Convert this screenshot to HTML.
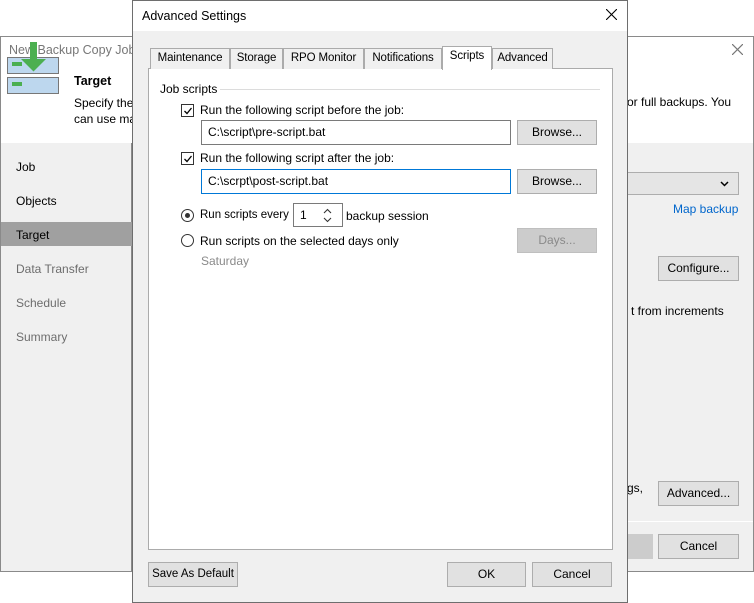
<!DOCTYPE html><html><head><style>
*{box-sizing:border-box;margin:0;padding:0}
body{width:754px;height:603px;background:#fff;font-family:"Liberation Sans",sans-serif;font-size:12px;color:#000;position:relative;overflow:hidden}
.a{position:absolute}
.btn{position:absolute;background:#e1e1e1;border:1px solid #adadad;text-align:center;line-height:23px;font-size:12px}
.tab{position:absolute;top:48px;height:21px;border:1px solid #ababab;border-bottom:none;background:#f0f0f0;line-height:19px;text-align:center;font-size:11.5px;letter-spacing:-0.1px}
.cb{position:absolute;width:13px;height:13px;border:1px solid #333;background:#fff}
.rd{position:absolute;width:13px;height:13px;border:1px solid #333;border-radius:50%;background:#fff}
.in{position:absolute;background:#fff;border:1px solid #7a7a7a;padding-left:6px;line-height:22px}
</style></head><body>
<div class="a" style="left:0;top:36px;width:754px;height:536px;border:1px solid #8a8a8a;background:#f0f0f0"></div>
<div class="a" style="left:1px;top:37px;width:752px;height:106px;background:#fff"></div>
<div class="a" style="left:9px;top:43px;color:#777;font-size:12.5px">New Backup Copy Job</div>
<svg class="a" style="left:732px;top:44px" width="11" height="11"><path d="M0 0L11 11M11 0L0 11" stroke="#777" stroke-width="1.2"/></svg>
<svg class="a" style="left:6px;top:40px" width="56" height="86" viewBox="0 0 56 86">
<rect x="1.5" y="17.5" width="51" height="16" fill="#bdd7ee" stroke="#777"/>
<rect x="1.5" y="37.5" width="51" height="16" fill="#bdd7ee" stroke="#777"/>
<rect x="6" y="42" width="10" height="4" fill="#4caf50"/><rect x="6" y="22" width="10" height="4" fill="#4caf50"/>
<path d="M24 2h7v17h9l-12.5 12.5-12.5-12.5h9z" fill="#4caf50"/></svg>
<div class="a" style="left:74px;top:74px;font-weight:bold;font-size:12.5px">Target</div>
<div class="a" style="left:74px;top:95px;line-height:16px">Specify the<br>can use ma</div>
<div class="a" style="left:627px;top:95px">or full backups. You</div>
<div class="a" style="left:1px;top:143px;width:131px;height:428px;background:#f0f0f0;border-right:1px solid #8a8a8a"></div>
<div class="a" style="left:1px;top:222px;width:131px;height:24px;background:#a0a0a0"></div>
<div class="a" style="left:16px;top:160px">Job</div>
<div class="a" style="left:16px;top:194px">Objects</div>
<div class="a" style="left:16px;top:228px">Target</div>
<div class="a" style="left:16px;top:262px;color:#6d6d6d">Data Transfer</div>
<div class="a" style="left:16px;top:296px;color:#6d6d6d">Schedule</div>
<div class="a" style="left:16px;top:330px;color:#6d6d6d">Summary</div>
<div class="a" style="left:627px;top:172px;width:112px;height:23px;background:#e5e5e5;border:1px solid #adadad"></div>
<svg class="a" style="left:720px;top:181px" width="9" height="6"><path d="M1 1l3.5 3.5L8 1" stroke="#000" stroke-width="1.5" fill="none"/></svg>
<div class="a" style="left:673px;top:202px;color:#0066cc">Map backup</div>
<div class="btn" style="left:658px;top:256px;width:81px">Configure...</div>
<div class="a" style="left:631px;top:304px">t from increments</div>
<div class="a" style="left:627px;top:481px">gs,</div>
<div class="btn" style="left:658px;top:481px;width:81px">Advanced...</div>
<div class="a" style="left:627px;top:521px;width:126px;height:1px;background:#fff"></div>
<div class="a" style="left:627px;top:534px;width:26px;height:25px;background:#cccccc"></div>
<div class="btn" style="left:658px;top:534px;width:81px">Cancel</div>
<div class="a" style="left:132px;top:0;width:496px;height:603px;border:1px solid #6e6e6e;background:#f0f0f0"></div>
<div class="a" style="left:133px;top:1px;width:494px;height:30px;background:#fff"></div>
<div class="a" style="left:142px;top:9px;font-size:12.5px">Advanced Settings</div>
<svg class="a" style="left:606px;top:9px" width="11" height="11"><path d="M0 0L11 11M11 0L0 11" stroke="#000" stroke-width="1.1"/></svg>
<div class="a" style="left:148px;top:68px;width:465px;height:482px;background:#fff;border:1px solid #ababab"></div>
<div class="tab" style="left:150px;width:80px">Maintenance</div>
<div class="tab" style="left:230px;width:53px">Storage</div>
<div class="tab" style="left:283px;width:81px">RPO Monitor</div>
<div class="tab" style="left:364px;width:78px">Notifications</div>
<div class="tab" style="left:442px;top:46px;height:24px;width:50px;background:#fff;z-index:2">Scripts</div>
<div class="tab" style="left:492px;width:61px">Advanced</div>
<div class="a" style="left:160px;top:82px">Job scripts</div>
<div class="a" style="left:220px;top:89px;width:380px;height:1px;background:#dcdcdc"></div>
<div class="cb" style="left:181px;top:104px"><svg class="a" style="left:1px;top:1px" width="10" height="10"><path d="M1.5 5l2.5 2.5L8.5 2" stroke="#000" stroke-width="1.3" fill="none"/></svg></div>
<div class="a" style="left:200px;top:103px">Run the following script before the job:</div>
<div class="in" style="left:201px;top:120px;width:310px;height:25px">C:\script\pre-script.bat</div>
<div class="btn" style="left:517px;top:120px;width:80px;height:25px">Browse...</div>
<div class="cb" style="left:181px;top:152px"><svg class="a" style="left:1px;top:1px" width="10" height="10"><path d="M1.5 5l2.5 2.5L8.5 2" stroke="#000" stroke-width="1.3" fill="none"/></svg></div>
<div class="a" style="left:200px;top:151px">Run the following script after the job:</div>
<div class="in" style="left:201px;top:169px;width:310px;height:25px;border-color:#0078d7">C:\scrpt\post-script.bat</div>
<div class="btn" style="left:517px;top:169px;width:80px;height:25px">Browse...</div>
<div class="rd" style="left:181px;top:209px"><div class="a" style="left:3px;top:3px;width:5px;height:5px;border-radius:50%;background:#333"></div></div>
<div class="a" style="left:200px;top:209px;font-size:11.5px">Run scripts every</div>
<div class="a" style="left:293px;top:203px;width:50px;height:24px;border:1px solid #7a7a7a;background:#fff;padding:4px 0 0 6px">1<svg class="a" style="left:29px;top:4px" width="9" height="15"><path d="M1 5l3.5-3.5L8 5M1 10l3.5 3.5L8 10" stroke="#333" stroke-width="1.1" fill="none"/></svg></div>
<div class="a" style="left:346px;top:209px">backup session</div>
<div class="rd" style="left:181px;top:234px"></div>
<div class="a" style="left:200px;top:234px">Run scripts on the selected days only</div>
<div class="btn" style="left:517px;top:228px;width:80px;height:25px;background:#ccc;border-color:#bfbfbf;color:#8a8a8a">Days...</div>
<div class="a" style="left:201px;top:254px;color:#8a8a8a">Saturday</div>
<div class="btn" style="left:148px;top:562px;width:90px;height:25px;font-size:11.5px">Save As Default</div>
<div class="btn" style="left:447px;top:562px;width:79px;height:25px">OK</div>
<div class="btn" style="left:532px;top:562px;width:80px;height:25px">Cancel</div>
</body></html>
